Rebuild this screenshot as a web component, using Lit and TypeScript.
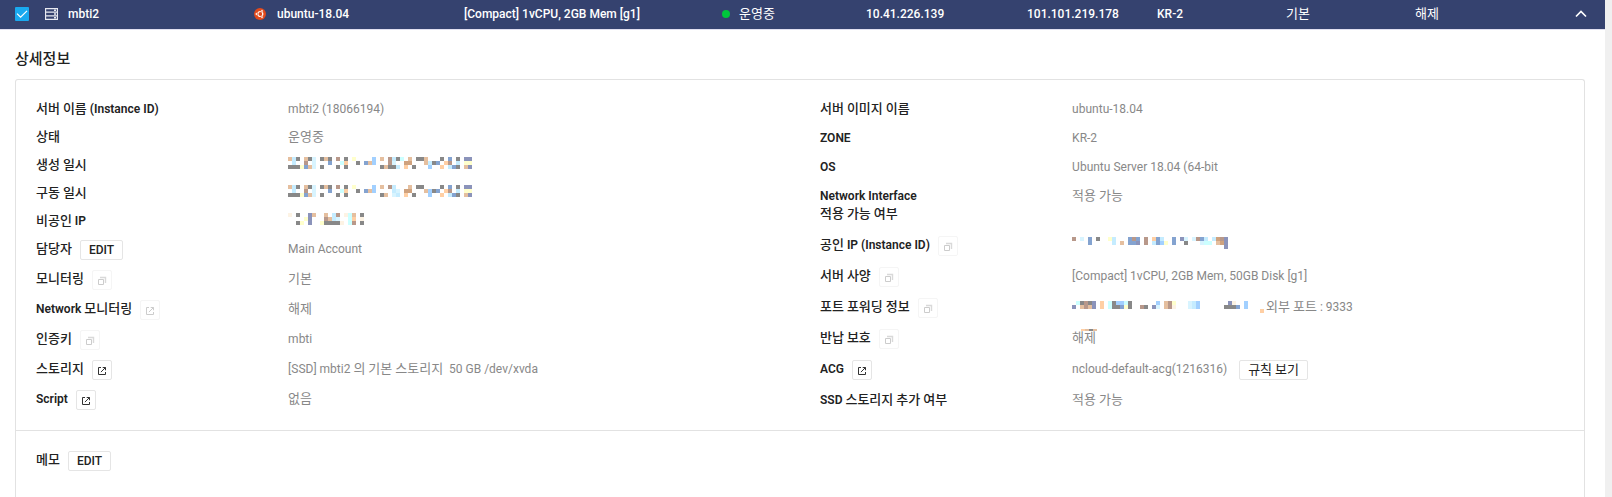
import { LitElement, html, svg, css, nothing, TemplateResult } from "lit";
import { customElement, property, state } from "lit/decorators.js";

type IconKind = "copy" | "link";

interface Field {
  label: string[];
  value?: string;
  icon?: IconKind;
  disabled?: boolean;
  edit?: boolean;
  content?: () => TemplateResult;
}

/* Hangul runs use a slightly larger size than the Latin text beside them. */
const mixed = (text: string) =>
  text
    .split(/([\u3131-\uD7A3]+)/)
    .filter((part) => part !== "")
    .map((part) => (/[\u3131-\uD7A3]/.test(part) ? html`<span class="ko">${part}</span>` : part));

const PALETTE: Record<string, string> = {
  g: "#888888",
  t: "#e5bf9f",
  c: "#c5ecff",
  y: "#ffffcc",
  b: "#84a3d0",
  B: "#a2d0ff",
  r: "#b8988a",
  p: "#8b93ba",
  o: "#ffcfa4",
  n: "#cfa27e",
  i: "#d8f4ff",
  w: "#fdf3e4",
  k: "#ccffff",
};

const CELL = 4;

/* Draws a masked value as a mosaic of coloured cells, one letter per cell. */
@customElement("masked-value")
export class MaskedValue extends LitElement {
  static styles = css`
    :host {
      display: block;
    }
    svg {
      display: block;
    }
  `;

  @property({ attribute: false }) rows: string[] = [];
  @property({ type: Number }) cell = CELL;

  render() {
    const cols = Math.max(...this.rows.map((r) => r.length));
    return html`<svg
      width=${cols * CELL}
      height=${this.rows.length * this.cell}
      shape-rendering="crispEdges"
      role="img"
      aria-hidden="true"
    >
      ${this.rows.map((row, y) =>
        [...row].map((c, x) =>
          PALETTE[c]
            ? svg`<rect x=${x * CELL} y=${y * this.cell} width=${CELL} height=${this.cell} fill=${PALETTE[c]}></rect>`
            : nothing
        )
      )}
    </svg>`;
  }
}

const CREATED = [
  "tcg.tgi.gtg.r.g.y....B.t.rcgk.t.ggt...g.b.g.pp",
  ".c..r.i...b..ko..g.btB...ri..nn...tcgb.or.c.yy",
  "gggybti.g...g.g........gtggc.o.g...B..o.cbg.tp",
];
const STARTED = [
  "tcg.tgi.gtg.r.g.y....B.t.rc...t.gg....g.b.g.pp",
  ".c..r.i...b..ko..g.btB....ci.nn...tBgb.or.c.yy",
  "gggybti.g...g.g........gt.ic.o.g...B..o.cbg.tp",
];
const PRIVATE_IP = ["w.g..pt..t.cr.wkt.g", "....yp...rtci..ko.w", "..gy.p..yggggw.kr.g"];
const PUBLIC_IP = [
  "r.i.b.g..yc...brb.r.obc..b.pi.irbc.cnrp",
  "....b.....c.t.bbp.r.cbBy.b..g...ikk.tnp",
  "......................................p",
];
const PORT_IP = [
  ".kgrgp.o.kgBBkg......B.try...icB.......pw..B....",
  "p.trtp.o.kggbyg..rg.pi.trw...icB......gggb.B....",
  "...............................................o",
];
const STRIP = ["otgt"];

@customElement("app-root")
export class AppRoot extends LitElement {
  static styles = css`
    :host {
      display: flex;
      min-height: 100vh;
      box-sizing: border-box;
      border-right: 7px solid #f0f0f0;
      background: #fff;
      color: #222;
      font-family: Roboto, "Noto Sans CJK KR", sans-serif;
      font-size: 12px;
      line-height: 18px;
    }
    .page {
      flex: 1;
      min-width: 0;
      display: flex;
      flex-direction: column;
    }
    .ko {
      font-size: 13px;
    }

    .bar {
      display: grid;
      grid-template-columns: 254fr 210fr 258fr 144fr 161fr 130fr 129fr 129fr 190fr;
      align-items: center;
      height: 28px;
      padding-bottom: 1px;
      background: #35426f;
      border-bottom: 1px solid #e1dff0;
      color: #fff;
      font-weight: 500;
      white-space: nowrap;
    }
    .bar .ko {
      font-weight: 400;
    }
    .cell {
      display: flex;
      align-items: center;
    }
    .first {
      padding-left: 15px;
    }
    .check {
      display: grid;
      width: 14px;
      height: 14px;
      margin-right: 16px;
    }
    .check input,
    .check svg {
      grid-area: 1 / 1;
    }
    .check input {
      appearance: none;
      width: 14px;
      height: 14px;
      margin: 0;
      border-radius: 1px;
      background: #fff;
    }
    .check input:checked {
      background: #1aa9ef;
    }
    .check svg {
      pointer-events: none;
    }
    .server {
      margin-right: 10px;
    }
    .os {
      margin-right: 11px;
    }
    .dot {
      width: 8px;
      height: 8px;
      margin-right: 9px;
      border-radius: 50%;
      background: #00c73c;
    }
    .toggle {
      margin: 0 17px 0 auto;
      padding: 0;
      border: 0;
      background: none;
      display: flex;
    }

    .detail {
      flex: 1;
      display: flex;
      flex-direction: column;
      padding: 18px 20px 0 15px;
    }
    h2 {
      margin: 0 0 9px;
      font-size: 15px;
      line-height: 22px;
      font-weight: 500;
    }
    .card {
      flex: 1;
      border: 1px solid #e2e2e2;
      border-bottom: 0;
      border-radius: 3px 3px 0 0;
    }
    .columns {
      display: grid;
      grid-template-columns: 1fr 1fr;
      padding: 14px 0 16px;
      border-bottom: 1px solid #e2e2e2;
    }
    dl {
      margin: 0;
      padding-left: 20px;
    }
    .row {
      display: grid;
      grid-template-columns: 33% 1fr;
      min-height: 28px;
    }
    .row.tall {
      min-height: 30px;
    }
    .right .row {
      min-height: 29px;
    }
    .right .row.tall {
      min-height: 31px;
    }
    dt,
    dd,
    .memo {
      display: flex;
      align-items: flex-start;
      gap: 8px;
      margin: 0;
      padding-top: 6px;
      box-sizing: border-box;
    }
    dt,
    .memo {
      color: #222;
      font-weight: 600;
    }
    dt .ko,
    .memo .ko {
      font-weight: 500;
    }
    .two-line {
      padding-bottom: 7px;
    }
    dd {
      gap: 12px;
      color: #888;
      white-space: pre;
    }
    dd .ko {
      font-weight: 400;
    }
    masked-value {
      margin-top: 1px;
    }
    .port {
      gap: 2px;
    }
    .port masked-value {
      margin-top: 3px;
    }
    .struck {
      position: relative;
    }
    .struck masked-value {
      position: absolute;
      top: 0;
      left: 9px;
      margin: 0;
    }
    .memo {
      padding: 20px;
    }

    .btn {
      flex: none;
      display: flex;
      align-items: center;
      justify-content: center;
      height: 20px;
      margin: 0;
      padding: 0 8px;
      box-sizing: border-box;
      border: 1px solid #e5e5e5;
      border-radius: 2px;
      background: #fff;
      color: #222;
      font: 500 12px/18px Roboto, "Noto Sans CJK KR", sans-serif;
    }
    .btn .ko {
      font-weight: 400;
    }
    .icon {
      width: 20px;
      padding: 2px 0 0;
      color: #333;
    }
    .icon:disabled {
      border-color: #f5f5f5;
      color: #ccc;
    }
  `;

  @state() private selected = true;

  private left: Field[] = [
    { label: ["서버 이름 (Instance ID)"], value: "mbti2 (18066194)" },
    { label: ["상태"], value: "운영중" },
    { label: ["생성 일시"], content: () => this.mask(CREATED) },
    { label: ["구동 일시"], content: () => this.mask(STARTED) },
    { label: ["비공인 IP"], content: () => this.mask(PRIVATE_IP) },
    { label: ["담당자"], edit: true, value: "Main Account" },
    { label: ["모니터링"], icon: "copy", disabled: true, value: "기본" },
    { label: ["Network 모니터링"], icon: "link", disabled: true, value: "해제" },
    { label: ["인증키"], icon: "copy", disabled: true, value: "mbti" },
    { label: ["스토리지"], icon: "link", value: "[SSD] mbti2 의 기본 스토리지  50 GB /dev/xvda" },
    { label: ["Script"], icon: "link", value: "없음" },
  ];

  private right: Field[] = [
    { label: ["서버 이미지 이름"], value: "ubuntu-18.04" },
    { label: ["ZONE"], value: "KR-2" },
    { label: ["OS"], value: "Ubuntu Server 18.04 (64-bit" },
    { label: ["Network Interface", "적용 가능 여부"], value: "적용 가능" },
    { label: ["공인 IP (Instance ID)"], icon: "copy", disabled: true, content: () => this.mask(PUBLIC_IP) },
    { label: ["서버 사양"], icon: "copy", disabled: true, value: "[Compact] 1vCPU, 2GB Mem, 50GB Disk [g1]" },
    {
      label: ["포트 포워딩 정보"],
      icon: "copy",
      disabled: true,
      content: () => html`<dd class="port">
        <masked-value .rows=${PORT_IP}></masked-value><span>${mixed("외부 포트 : 9333")}</span>
      </dd>`,
    },
    {
      label: ["반납 보호"],
      icon: "copy",
      disabled: true,
      content: () => html`<dd><span class="struck">${mixed("해제")}<masked-value .rows=${STRIP} .cell=${2}></masked-value></span></dd>`,
    },
    {
      label: ["ACG"],
      icon: "link",
      content: () => html`<dd><span>ncloud-default-acg(1216316)</span><button class="btn" type="button"><span>${mixed("규칙 보기")}</span></button></dd>`,
    },
    { label: ["SSD 스토리지 추가 여부"], value: "적용 가능" },
  ];

  private mask(rows: string[]) {
    return html`<dd><masked-value .rows=${rows}></masked-value></dd>`;
  }

  private glyph(kind: IconKind) {
    return kind === "copy"
      ? html`<svg width="10" height="10" viewBox="0 0 10 10" fill="none" stroke="currentColor">
          <path d="M1.5 3.5h5v5h-5z" /><path d="M3 1.5h5.5V7" stroke-width="1.4" opacity=".75" />
        </svg>`
      : html`<svg width="10" height="10" viewBox="0 0 10 10" fill="none" stroke="currentColor">
          <path d="M4 1.5H1.5v7h7V6" /><path d="M5.7 1.5h2.8v2.8M8.5 1.5 3.9 6.1" />
        </svg>`;
  }

  private field(f: Field) {
    const tall = f.icon || f.edit;
    return html`<div class="row ${tall ? "tall" : ""}">
      <dt class=${f.label.length > 1 ? "two-line" : ""}>
        <span>${f.label.map((line, i) => html`${i ? html`<br />` : nothing}${mixed(line)}`)}</span>
        ${f.edit ? html`<button class="btn" type="button">EDIT</button>` : nothing}
        ${f.icon
          ? html`<button class="btn icon" type="button" aria-label=${f.label.join(" ")} ?disabled=${!!f.disabled}>${this.glyph(f.icon)}</button>`
          : nothing}
      </dt>
      ${f.content ? f.content() : html`<dd><span>${mixed(f.value ?? "")}</span></dd>`}
    </div>`;
  }

  private bar() {
    return html`<header class="bar">
      <div class="cell first">
        <label class="check">
          <input
            type="checkbox"
            aria-label="mbti2"
            .checked=${this.selected}
            @change=${(e: Event) => (this.selected = (e.target as HTMLInputElement).checked)}
          />
          <svg width="14" height="14" viewBox="0 0 14 14" fill="none" stroke="#fff" stroke-width="1.2">
            <path d="M2 6.6 5.6 10.2 12 3.8" />
          </svg>
        </label>
        <svg class="server" width="13" height="12" viewBox="0 0 13 12" fill="none" stroke="#e8eaf2">
          <path d="M.5 .5h12v11H.5zM.5 4.1h12M.5 7.8h12" stroke-width="1.3" />
          <path d="M9 2.3h2M9 6h2M9 9.7h2" stroke-width="1.6" />
        </svg>
        <span>mbti2</span>
      </div>
      <div class="cell">
        <svg class="os" width="12" height="12" viewBox="0 0 12 12">
          <circle cx="6" cy="6" r="6" fill="#e2491b" />
          <circle cx="6.3" cy="6" r="2.5" fill="none" stroke="#fff" stroke-width="1.2" />
          <g fill="#fff" stroke="#e2491b" stroke-width=".5">
            <circle cx="2.5" cy="6" r="1.2" />
            <circle cx="8" cy="2.9" r="1.2" />
            <circle cx="8" cy="9.1" r="1.2" />
          </g>
        </svg>
        <span>ubuntu-18.04</span>
      </div>
      <div class="cell">[Compact] 1vCPU, 2GB Mem [g1]</div>
      <div class="cell"><i class="dot"></i>${mixed("운영중")}</div>
      <div class="cell">10.41.226.139</div>
      <div class="cell">101.101.219.178</div>
      <div class="cell">KR-2</div>
      <div class="cell">${mixed("기본")}</div>
      <div class="cell">
        ${mixed("해제")}
        <button class="toggle" type="button" aria-label="상세정보" aria-expanded="true">
          <svg width="14" height="10" viewBox="0 0 14 10" fill="none" stroke="#fff" stroke-width="1.7">
            <path d="M2 7.5 7 2.5l5 5" />
          </svg>
        </button>
      </div>
    </header>`;
  }

  render() {
    return html`<div class="page">
      ${this.bar()}
      <main class="detail">
        <h2>상세정보</h2>
        <section class="card">
          <div class="columns">
            <dl class="left">${this.left.map((f) => this.field(f))}</dl>
            <dl class="right">${this.right.map((f) => this.field(f))}</dl>
          </div>
          <div class="memo"><span>${mixed("메모")}</span><button class="btn" type="button">EDIT</button></div>
        </section>
      </main>
    </div>`;
  }
}
